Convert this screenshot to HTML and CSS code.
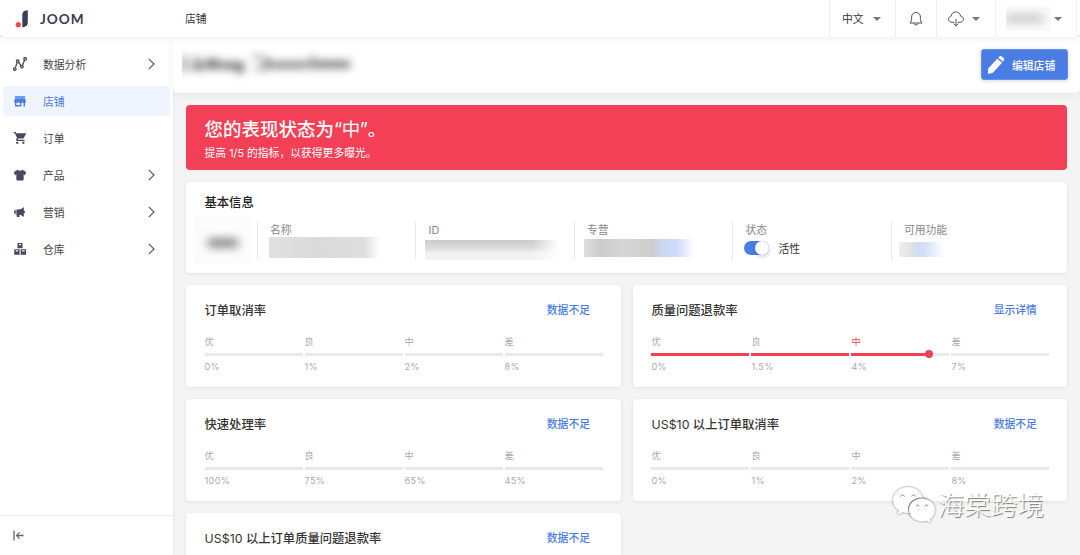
FILE: index.html
```html
<!DOCTYPE html>
<html lang="zh-CN">
<head>
    <meta charset="UTF-8">
    <meta name="viewport" content="width=device-width, initial-scale=1.0">
    <title>店铺</title>
    <link rel="stylesheet" href="styles.css">
</head>
<body>
    <!-- Top bar -->
    <header class="topbar">
        <div class="logo">
            <svg class="logo-mark" width="14" height="18" viewBox="0 0 14 18">
                <circle cx="3.3" cy="14.7" r="2.6" fill="#f8464a"/>
                <path d="M7.3 4.6 Q7.6 1 11 .4 L12.8 .2 V12.6 Q12.6 16.2 9.2 16.9 L7.3 17.2 Z" fill="#3b3c55"/>
            </svg>
            <span class="logo-text">JOOM</span>
        </div>
        <div class="page-name">店铺</div>
        <div class="tools">
            <div class="tool tool-lang"><span>中文</span> <i class="caret"></i></div>
            <div class="tool tool-bell">
                <svg width="14" height="16" viewBox="0 0 14 16" fill="none" stroke="#555" stroke-width="1">
                    <path d="M.8 12 C2.2 10.8 2.6 9.6 2.6 7.2 V6 C2.6 3.3 4.5 1.5 7 1.5 S11.4 3.3 11.4 6 V7.2 C11.4 9.6 11.8 10.8 13.2 12 Z" stroke-linejoin="round"/>
                    <path d="M5 12.4 Q5.5 14.1 7 14.1 T9 12.4"/>
                </svg>
            </div>
            <div class="tool tool-cloud">
                <svg width="16" height="16" viewBox="0 0 16 16" fill="none" stroke="#555" stroke-width="1" stroke-linecap="round" stroke-linejoin="round">
                    <path d="M6 11.3 H4 C2 11.3 .6 10 .6 8.2 C.6 6.6 1.7 5.4 3.3 5.1 C3.3 2.6 5.2 .9 7.9 .9 C10.5 .9 12.4 2.6 12.5 5.1 C14.2 5.4 15.4 6.6 15.4 8.2 C15.4 10 14 11.3 12 11.3 H10"/>
                    <path d="M8 8.4 V14.8 M5.9 12.8 L8 14.9 L10.1 12.8"/>
                </svg>
                <i class="caret"></i>
            </div>
            <div class="tool tool-user">
                <span class="masked masked-user"><i></i></span>
                <i class="caret"></i>
            </div>
        </div>
    </header>

    <div class="layout">
        <!-- Sidebar -->
        <aside class="sidebar">
            <nav>
                <a href="#" class="nav-item">
                    <svg class="nav-icon" viewBox="0 0 14 14" fill="none" stroke="#474a5c" stroke-width="1.3">
                        <circle cx="1.8" cy="12.1" r="1.3"/><circle cx="4.7" cy="4.3" r="1.3"/><circle cx="8.9" cy="9.6" r="1.3"/><circle cx="12.1" cy="1.9" r="1.3"/>
                        <path d="M2.3 10.8 L4.2 5.6 M5.5 5.3 L8 8.6 M9.4 8.4 L11.6 3.1"/>
                    </svg>
                    <span>数据分析</span>
                    <svg class="chevron" viewBox="0 0 7 12"><path d="M.8 .8 L6 6 L.8 11.2"/></svg>
                </a>
                <a href="#" class="nav-item active">
                    <svg class="nav-icon" viewBox="0 0 14 14" fill="#4a7de3"><path d="M2 2.200 h10 v1.500 H2z M2 4.300 h10 l.9 3.300 v1.200 h-.9 v3.600 h-1.500 V8.800 H8.400 v3.600 H2 V8.800 h-.9 V7.600z M3.400 8.800 v2.200 H7 V8.800z" fill-rule="evenodd"/></svg>
                    <span>店铺</span>
                </a>
                <a href="#" class="nav-item">
                    <svg class="nav-icon" viewBox="0 0.500 23 23" fill="#474a5c"><path d="M7 18c-1.100 0-2 .9-2 2s.9 2 2 2 2-.9 2-2-.9-2-2-2zM1 2v2h2l3.600 7.600-1.350 2.450C4.500 15.400 5.500 17 7 17h12v-2H7.400l1.100-2h7.450c.75 0 1.410-.41 1.750-1.030L21.500 5c.3-.5 0-1-.6-1H5.210L4.270 2zM17 18c-1.100 0-2 .9-2 2s.9 2 2 2 2-.9 2-2-.9-2-2-2z"/></svg>
                    <span>订单</span>
                </a>
                <a href="#" class="nav-item">
                    <svg class="nav-icon" viewBox="0 0 14 14" fill="#474a5c"><path d="M4.600 2 Q7 4.200 9.400 2 L12.900 4 L11.900 6.900 L10.400 6.300 V11.500 Q10.400 12.200 9.700 12.200 H4.300 Q3.600 12.200 3.600 11.500 V6.300 L2.100 6.900 L1.100 4 Z" stroke="#474a5c" stroke-width=".5" stroke-linejoin="round"/></svg>
                    <span>产品</span>
                    <svg class="chevron" viewBox="0 0 7 12"><path d="M.8 .8 L6 6 L.8 11.2"/></svg>
                </a>
                <a href="#" class="nav-item">
                    <svg class="nav-icon" viewBox="0 0 14 14" fill="#474a5c"><path d="M5.300 4.400 C7.500 4.300 9.500 3.300 10.800 2 V5.600 Q12 5.800 12 7 T10.800 8.400 V12 C9.500 10.700 7.800 9.900 6.500 9.700 V12.100 H3.900 L3.400 9.400 V4.400 Z"/><path d="M2.700 4.500 V9.300 Q1 9 1 6.900 T2.700 4.500 Z"/></svg>
                    <span>营销</span>
                    <svg class="chevron" viewBox="0 0 7 12"><path d="M.8 .8 L6 6 L.8 11.2"/></svg>
                </a>
                <a href="#" class="nav-item">
                    <svg class="nav-icon" viewBox="0 0 14 14" fill="#474a5c"><path fill-rule="evenodd" d="M4.500 1 h5 v5.200 h-5z M6 2 v1.300 h2 V2z M1.200 7.200 h5.400 v5.500 H1.200z M2.700 8.300 v1.300 h2.400 V8.300z M7.700 7.200 h5.400 v5.500 H7.700z M9.200 8.300 v1.300 h2.400 V8.300z"/></svg>
                    <span>仓库</span>
                    <svg class="chevron" viewBox="0 0 7 12"><path d="M.8 .8 L6 6 L.8 11.2"/></svg>
                </a>
            </nav>
            <div class="sidebar-footer">
                <svg width="12" height="11" viewBox="0 0 12 11" fill="none" stroke="#62647a" stroke-width="1.300"><path d="M1 .5 V10.500 M3.400 5.500 H10.600 M6.600 2.400 L3.500 5.500 L6.600 8.600"/></svg>
            </div>
        </aside>

        <!-- Main Content -->
        <main class="main-content">
            <div class="page-header">
                <div class="masked masked-title">
                    <svg width="176" height="32" viewBox="0 0 176 32" fill="#777">
                        <path d="M-4 7h8v16h-8z M11 8h8v2h-8z M10 13h12v8H10z M24 10h13v10H24z M38 13h24v7H38z M54 18h8v6h-8z M71 6h9v3h-9z M73 18h9v3h-9z M82 9h6v11h-6z M89 13h37v6H89z M128 8h5v12h-5z M134 12h34v7h-34z"/>
                    </svg>
                </div>
                <button class="edit-button">
                    <svg width="18" height="20" viewBox="0 0 18 20" fill="#fff"><path d="M1.300 13.300 L10.300 3.800 L15 7.800 L5.900 17.700 L.9 18.900 Z M11.300 2.700 L12.900 1 Q13.600 .5 14.300 1 L17 3.400 Q17.600 4.200 17 4.900 L15.900 6.800 Z"/></svg>
                    <span>编辑店铺</span>
                </button>
            </div>

            <div class="content">
                <section class="banner">
                    <h1>您的表现状态为<span class="quoted">“中”</span>。</h1>
                    <p>提高 1/5 的指标，以获得更多曝光。</p>
                </section>

                <section class="card info-card">
                    <h2>基本信息</h2>
                    <div class="info-row">
                        <div class="masked masked-logo"><i></i></div>
                        <div class="info-col">
                            <label>名称</label>
                            <div class="masked masked-name"></div>
                        </div>
                        <div class="info-col">
                            <label>ID</label>
                            <div class="masked masked-id"></div>
                        </div>
                        <div class="info-col">
                            <label>专营</label>
                            <div class="masked masked-type"></div>
                        </div>
                        <div class="info-col">
                            <label>状态</label>
                            <div class="status"><span class="switch"></span>活性</div>
                        </div>
                        <div class="info-col">
                            <label>可用功能</label>
                            <div class="masked masked-feature"></div>
                        </div>
                    </div>
                </section>

                <section class="metrics">
                    <div class="card metric">
                        <div class="metric-head"><h3>订单取消率</h3><a href="#">数据不足</a></div>
                        <div class="scale">
                            <div class="step"><span>优</span><b></b><em>0%</em></div>
                            <div class="step"><span>良</span><b></b><em>1%</em></div>
                            <div class="step"><span>中</span><b></b><em>2%</em></div>
                            <div class="step"><span>差</span><b></b><em>8%</em></div>
                        </div>
                    </div>
                    <div class="card metric">
                        <div class="metric-head"><h3>质量问题退款率</h3><a href="#">显示详情</a></div>
                        <div class="scale">
                            <div class="step filled"><span>优</span><b></b><em>0%</em></div>
                            <div class="step filled"><span>良</span><b></b><em>1.5%</em></div>
                            <div class="step current"><span>中</span><b><i style="width: 79%"></i></b><em>4%</em></div>
                            <div class="step"><span>差</span><b></b><em>7%</em></div>
                        </div>
                    </div>
                    <div class="card metric">
                        <div class="metric-head"><h3>快速处理率</h3><a href="#">数据不足</a></div>
                        <div class="scale">
                            <div class="step"><span>优</span><b></b><em>100%</em></div>
                            <div class="step"><span>良</span><b></b><em>75%</em></div>
                            <div class="step"><span>中</span><b></b><em>65%</em></div>
                            <div class="step"><span>差</span><b></b><em>45%</em></div>
                        </div>
                    </div>
                    <div class="card metric">
                        <div class="metric-head"><h3><span class="amount">US$10</span> 以上订单取消率</h3><a href="#">数据不足</a></div>
                        <div class="scale">
                            <div class="step"><span>优</span><b></b><em>0%</em></div>
                            <div class="step"><span>良</span><b></b><em>1%</em></div>
                            <div class="step"><span>中</span><b></b><em>2%</em></div>
                            <div class="step"><span>差</span><b></b><em>8%</em></div>
                        </div>
                    </div>
                    <div class="card metric metric-last">
                        <div class="metric-head"><h3><span class="amount">US$10</span> 以上订单质量问题退款率</h3><a href="#">数据不足</a></div>
                    </div>
                </section>
            </div>
        </main>
    </div>

    <!-- Watermark -->
    <div class="watermark">
        <svg width="44" height="38" viewBox="0 0 44 38" fill="#fff">
            <path d="M16 1 C7.500 1 1 6.800 1 14 C1 18.200 3.200 21.700 6.800 24.200 L5.600 28.800 L10.600 26.200 C12.400 26.700 14.200 27 16 27 C24.500 27 31 21.200 31 14 S24.500 1 16 1 Z"/>
            <path class="front-bubble" d="M30 12.500 C22.800 12.500 17 17.600 17 24 S22.800 35.500 30 35.500 C31.600 35.500 33.200 35.200 34.600 34.800 L39 37 L38 33.200 C41 31.100 43 27.800 43 24 C43 17.600 37.200 12.500 30 12.500 Z"/>
            <g fill="none" stroke="#8a8a8a" stroke-width="1">
                <path d="M8.500 10.500 Q10.500 7 12.500 10.500 M19.500 10.500 Q21.500 7 23.500 10.500 M24 20.300 Q25.700 17.300 27.400 20.300 M32.800 20.300 Q34.500 17.300 36.200 20.300"/>
            </g>
        </svg>
        <span>海棠跨境</span>
    </div>
</body>
</html>
```
FILE: styles.css
```css
* {
    box-sizing: border-box;
}

body {
    margin: 0;
    height: 555px;
    overflow: hidden;
    display: flex;
    flex-direction: column;
    font-family: Inter, "Noto Sans CJK SC", sans-serif;
    font-size: 10.8px;
    color: #333;
    background: #f4f4f4;
}

h1, h2, h3, p {
    margin: 0;
}

a {
    text-decoration: none;
}

/* Top bar */
.topbar {
    position: relative;
    z-index: 2;
    flex: none;
    display: flex;
    align-items: center;
    height: 37px;
    background: #fff;
    border-radius: 0 0 5px 5px;
    box-shadow: 0 1px 8px rgba(0, 0, 0, 0.08);
}

.logo {
    display: flex;
    align-items: center;
    width: 185px;
    padding-left: 15px;
}

.logo-text {
    margin-left: 11px;
    font-family: Lato, sans-serif;
    font-size: 13.6px;
    font-weight: 700;
    letter-spacing: 1px;
    color: #3b3c55;
}

.page-name, .tool-lang span {
    padding-bottom: 2px;
}

.tools {
    display: flex;
    height: 37px;
    margin-left: auto;
    margin-right: 3px;
    border-right: 1px solid #eee;
}

.tool {
    display: flex;
    align-items: center;
    border-left: 1px solid #eee;
}

.tool-lang {
    width: 66px;
    padding-left: 12px;
    gap: 9px;
}

.tool-bell {
    width: 41px;
    padding-right: 1px;
    justify-content: center;
}

.tool-cloud {
    width: 59px;
    padding-left: 11px;
    gap: 8px;
}

.tool-user {
    width: 81px;
    padding-left: 10px;
    gap: 3px;
}

.caret {
    border: 4px solid transparent;
    border-top-color: #777;
    border-bottom: 0;
}

/* Masked values */
.masked {
    overflow: hidden;
}

.masked i {
    display: block;
    background: #999;
    filter: blur(5px);
}

.masked-user {
    width: 45px;
    height: 25px;
    padding: 10px 8px 0 0;
    background: #f9f9f9;
}

.masked-user i {
    height: 5px;
    background: #aaa;
}

.masked-title {
    width: 176px;
    height: 32px;
}

.masked-title svg {
    filter: blur(4px);
}

.masked-logo {
    width: 58px;
    height: 49px;
    padding: 24px 14px 0;
    background: #fcfcfc;
}

.masked-logo i {
    height: 8px;
    background: #777;
}

.masked-name {
    width: 122px;
    height: 21px;
    margin: 0 0 0 -1px;
    background: linear-gradient(90deg, #e0e0e0, #dadada 40%, #dedede 78%, #fff 91%);
}

.masked-id {
    width: 134px;
    height: 20px;
    margin: 3px 0 0 -3px;
    background: linear-gradient(90deg, transparent 80%, #fff), linear-gradient(#cbcbcb, #dcdcdc 40%, #f1f1f1 65%, #f3f3f3);
}

.masked-type {
    width: 114px;
    height: 18px;
    margin: 2px 0 0 -3px;
    background: linear-gradient(90deg, #dedede, #cbcbcb 15%, #d6d6d6 35%, #cdcdcd 60%, #cbd8f2 70%, #d1ddf8 82%, #fff 97%);
}

.masked-feature {
    width: 45px;
    height: 15px;
    margin: 5px 0 0 -5px;
    background: linear-gradient(90deg, #eee, #e4e4e8 25%, #cfdcf6 42%, #d6e1f7 60%, #fff);
}

/* Layout */
.layout {
    flex: 1;
    display: flex;
    min-height: 0;
}

.sidebar {
    display: flex;
    flex-direction: column;
    width: 173px;
    background: #fff;
    box-shadow: 0 0 3px rgba(0, 0, 0, 0.08);
}

.sidebar nav {
    display: flex;
    flex-direction: column;
    gap: 7px;
    padding: 12px 3px;
}

.nav-item {
    display: flex;
    align-items: center;
    height: 30px;
    padding: 0 15px 0 10px;
    border-radius: 3px;
    color: #444;
}

.nav-item span {
    padding-bottom: 1px;
}

.nav-item.active {
    background: #eff4fe;
    color: #4a7de3;
}

.nav-icon {
    width: 14px;
    height: 14px;
    margin-right: 16px;
}

.chevron {
    width: 7px;
    height: 12px;
    margin-left: auto;
    fill: none;
    stroke: #55586a;
    stroke-width: 1.2;
}

.sidebar-footer {
    display: flex;
    align-items: center;
    height: 40px;
    margin-top: auto;
    padding-left: 13px;
    border-top: 1px solid #eee;
}

.main-content {
    flex: 1;
    min-width: 0;
}

.page-header {
    display: flex;
    align-items: center;
    justify-content: space-between;
    height: 56px;
    padding: 0 12px 1px 9px;
    background: #fff;
    border-radius: 0 0 5px 5px;
    box-shadow: 0 2px 8px rgba(0, 0, 0, 0.06);
}

.edit-button {
    display: flex;
    align-items: center;
    gap: 7px;
    width: 87px;
    height: 31px;
    padding: 0 5px;
    border: 1px solid #6490e8;
    border-radius: 3px;
    background: #4a7de3;
    box-shadow: 0 1px 4px rgba(0, 0, 0, 0.16);
    color: #fff;
    font-family: inherit;
    font-size: 10.8px;
    font-weight: 500;
    white-space: nowrap;
}

.edit-button svg {
    flex: none;
}

.content {
    display: flex;
    flex-direction: column;
    gap: 12px;
    padding: 12px 12.6px 0 13px;
}

.banner {
    height: 64.5px;
    padding: 11px 18.5px;
    border-radius: 4px;
    background: #f44056;
    color: #fff;
}

.banner h1 {
    font-size: 18.5px;
    line-height: 26px;
    font-weight: 500;
}

.quoted {
    font-family: Inter, "Noto Sans CJK SC", sans-serif;
    font-weight: 400;
    letter-spacing: -0.4px;
}

.banner p {
    padding-top: 1px;
    line-height: 21px;
}

.card {
    background: #fff;
    border-radius: 4px;
    box-shadow: 0 1px 4px rgba(0, 0, 0, 0.08);
}

.info-card {
    height: 91.5px;
    padding: 12px 18px 0 8px;
}

.info-card h2 {
    padding-left: 10.5px;
    font-size: 12.3px;
    line-height: 18px;
    font-weight: 500;
    color: #222;
}

.info-row {
    display: flex;
    align-items: center;
    margin-top: 4px;
}

.masked-logo {
    flex: none;
    margin: -1px 5px 1px 0;
}

.info-col {
    flex: 1;
    height: 37px;
    padding-left: 12px;
    border-left: 1px solid #e8e8e8;
}

.info-col label {
    display: block;
    height: 15px;
    line-height: 17px;
    color: #888;
}

.status {
    display: flex;
    align-items: center;
    gap: 9px;
    height: 22px;
}

.switch {
    width: 25px;
    height: 14px;
    margin-left: -1px;
    border-radius: 7px;
    background: #4a7de3;
}

.switch::after {
    content: "";
    display: block;
    width: 14px;
    height: 14px;
    margin-left: 11px;
    border-radius: 50%;
    background: #fff;
    box-shadow: 0 2px 4px rgba(0, 0, 0, 0.18);
}

/* Metrics */
.metrics {
    display: grid;
    grid-template-columns: 1fr 1fr;
    gap: 12.4px;
    row-gap: 12px;
}

.metric {
    height: 102px;
    padding: 15px 18px 0 18.5px;
}

.metric-last {
    height: 42px;
    border-radius: 4px 4px 0 0;
}

.metric-head {
    display: flex;
    align-items: center;
    justify-content: space-between;
    height: 19px;
    padding-right: 12.5px;
}

.metric-head h3 {
    font-size: 12.3px;
    font-weight: 500;
}

.amount {
    font-weight: 400;
    letter-spacing: 0.1px;
}

.metric-head a {
    padding-bottom: 1px;
    color: #4a7de3;
    font-weight: 500;
}

.scale {
    display: grid;
    grid-template-columns: repeat(4, 1fr);
    gap: 2px;
    margin-top: 16px;
    font-size: 9.2px;
    line-height: 13px;
    color: #aaa;
}

.step span, .step b, .step em {
    display: block;
}

.step b {
    height: 3px;
    margin: 4.5px 0;
    background: #eaeaea;
}

.step em {
    font-style: normal;
    letter-spacing: 0.3px;
}

.step.filled b, .step.current i {
    background: #f44056;
}

.step.current span {
    color: #f44056;
}

.step.current i {
    display: flex;
    align-items: center;
    justify-content: flex-end;
    height: 3px;
}

.step.current i::after {
    content: "";
    flex: none;
    width: 8px;
    height: 8px;
    margin-right: -4px;
    border-radius: 50%;
    background: #f44056;
}

.watermark {
    position: absolute;
    right: 36px;
    bottom: 30px;
    z-index: 3;
    display: flex;
    align-items: center;
    gap: 2px;
    color: #fff;
    font-family: "Noto Sans CJK SC", sans-serif;
    font-size: 26.6px;
    font-weight: 300;
    line-height: 38px;
    text-shadow: 1px 1px 1px #777;
}

.watermark span {
    padding-bottom: 2px;
}

.watermark svg {
    filter: drop-shadow(0.5px 0.5px 0.8px #777);
}

.front-bubble {
    filter: drop-shadow(-0.5px -0.5px 0.6px #888);
}
```
